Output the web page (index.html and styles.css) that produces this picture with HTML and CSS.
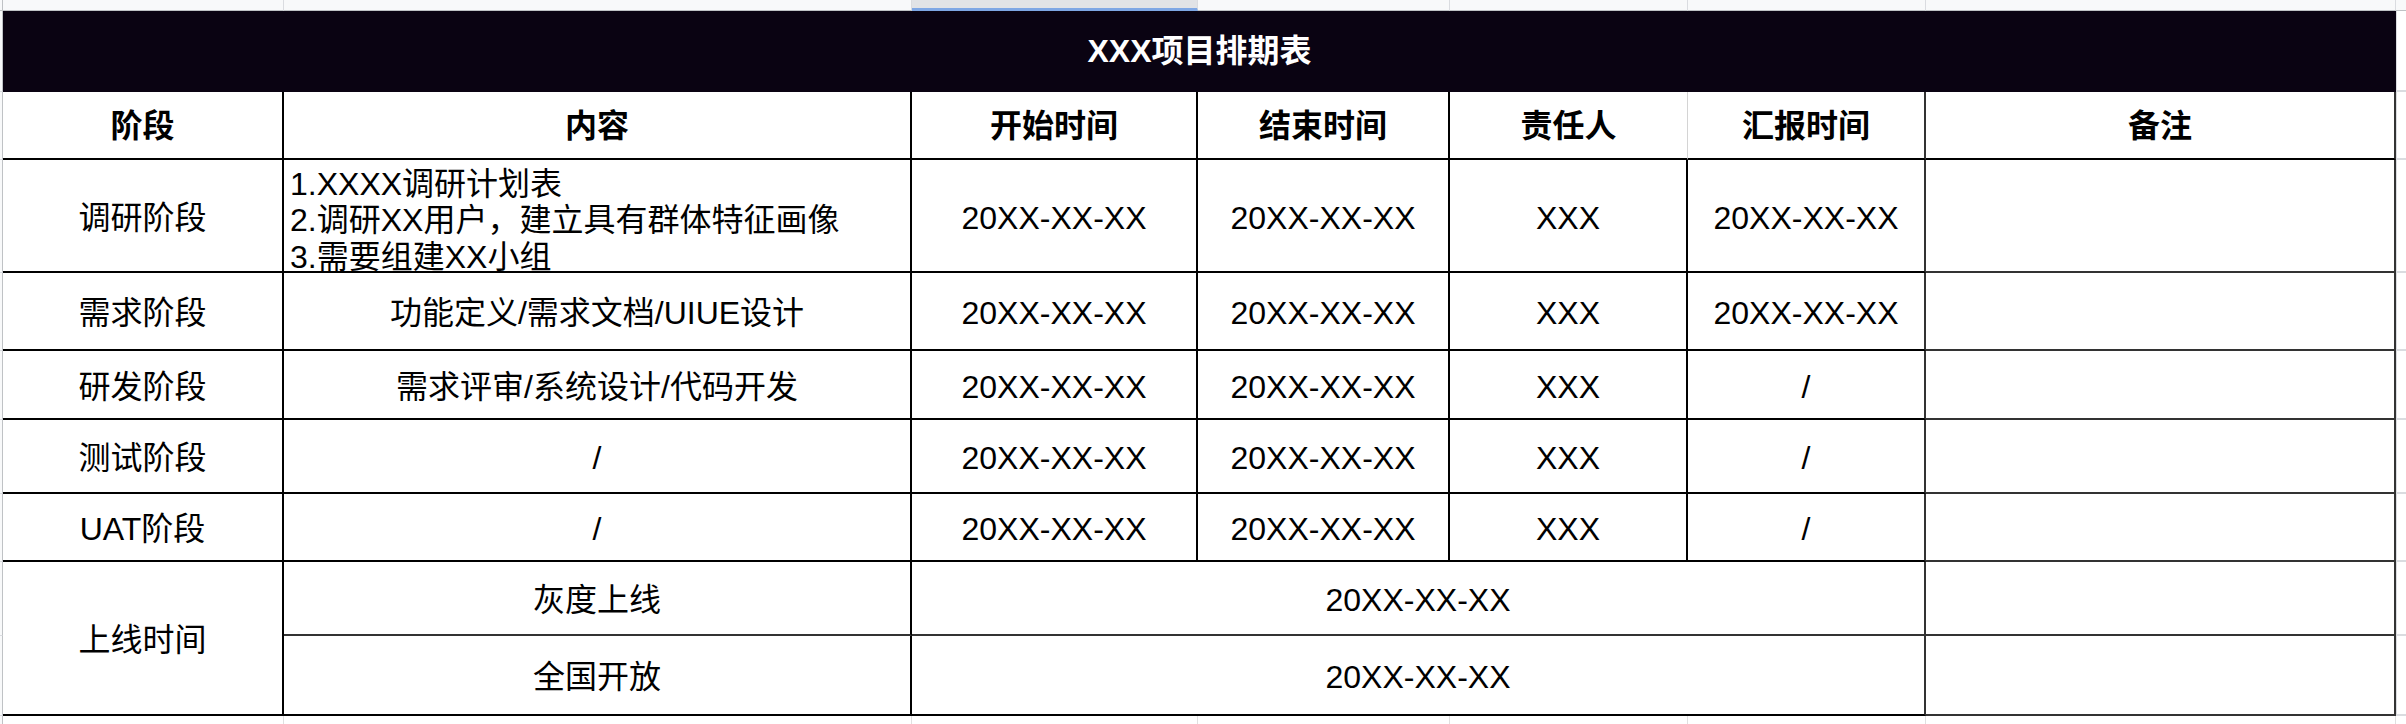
FILE: index.html
```html
<!DOCTYPE html>
<html lang="zh-CN">
<head>
<meta charset="utf-8">
<title>XXX项目排期表</title>
<link rel="stylesheet" href="styles.css">
</head>
<body>
<div class="sheet">
  <!-- spreadsheet column header strip -->
  <div class="ch corner"></div>
  <div class="ch"></div>
  <div class="ch"></div>
  <div class="ch sel"></div>
  <div class="ch"></div>
  <div class="ch"></div>
  <div class="ch"></div>
  <div class="ch"></div>
  <div class="ch last"></div>

  <!-- title -->
  <div class="rh"></div>
  <div class="title">XXX项目排期表</div>
  <div class="rp"></div>

  <!-- header -->
  <div class="rh"></div>
  <div class="c hd">阶段</div>
  <div class="c hd">内容</div>
  <div class="c hd">开始时间</div>
  <div class="c hd">结束时间</div>
  <div class="c hd soft">责任人</div>
  <div class="c hd dk">汇报时间</div>
  <div class="c hd dk">备注</div>
  <div class="rp"></div>

  <!-- row 1 -->
  <div class="rh"></div>
  <div class="c">调研阶段</div>
  <div class="c multi"><span>1.XXXX调研计划表</span><span>2.调研XX用户，建立具有群体特征画像</span><span>3.需要组建XX小组</span></div>
  <div class="c">20XX-XX-XX</div>
  <div class="c">20XX-XX-XX</div>
  <div class="c">XXX</div>
  <div class="c dk">20XX-XX-XX</div>
  <div class="c dk note"></div>
  <div class="rp"></div>

  <!-- row 2 -->
  <div class="rh"></div>
  <div class="c">需求阶段</div>
  <div class="c">功能定义/需求文档/UIUE设计</div>
  <div class="c">20XX-XX-XX</div>
  <div class="c">20XX-XX-XX</div>
  <div class="c">XXX</div>
  <div class="c dk">20XX-XX-XX</div>
  <div class="c dk note"></div>
  <div class="rp"></div>

  <!-- row 3 -->
  <div class="rh"></div>
  <div class="c">研发阶段</div>
  <div class="c">需求评审/系统设计/代码开发</div>
  <div class="c">20XX-XX-XX</div>
  <div class="c">20XX-XX-XX</div>
  <div class="c">XXX</div>
  <div class="c dk">/</div>
  <div class="c dk note"></div>
  <div class="rp"></div>

  <!-- row 4 -->
  <div class="rh"></div>
  <div class="c">测试阶段</div>
  <div class="c">/</div>
  <div class="c">20XX-XX-XX</div>
  <div class="c">20XX-XX-XX</div>
  <div class="c">XXX</div>
  <div class="c dk">/</div>
  <div class="c dk note"></div>
  <div class="rp"></div>

  <!-- row 5 -->
  <div class="rh"></div>
  <div class="c">UAT阶段</div>
  <div class="c">/</div>
  <div class="c">20XX-XX-XX</div>
  <div class="c">20XX-XX-XX</div>
  <div class="c">XXX</div>
  <div class="c dk">/</div>
  <div class="c dk note"></div>
  <div class="rp"></div>

  <!-- row 6 -->
  <div class="rh"></div>
  <div class="c span-rows">上线时间</div>
  <div class="c sub">灰度上线</div>
  <div class="c dk sub span-cols">20XX-XX-XX</div>
  <div class="c dk sub note"></div>
  <div class="rp"></div>

  <!-- row 7 -->
  <div class="rh"></div>
  <div class="c">全国开放</div>
  <div class="c dk span-cols">20XX-XX-XX</div>
  <div class="c dk note"></div>
  <div class="rp"></div>

  <!-- spreadsheet grid below -->
  <div class="bc corner"></div>
  <div class="bc"></div>
  <div class="bc"></div>
  <div class="bc"></div>
  <div class="bc"></div>
  <div class="bc"></div>
  <div class="bc"></div>
  <div class="bc"></div>
  <div class="bc last"></div>
</div>
</body>
</html>
```

FILE: styles.css
```css
* {
  box-sizing: border-box;
}

html, body {
  margin: 0;
  padding: 0;
  background: #ffffff;
}

body {
  width: 2406px;
  height: 724px;
  overflow: hidden;
  font-family: "Liberation Sans", "Noto Sans CJK SC", sans-serif;
  color: #000000;
}

.sheet {
  display: grid;
  grid-template-columns: 3px 281px 628px 286px 252px 238px 238px 470px 10px;
  grid-template-rows: 11px 81px 68px 113px 78px 69px 74px 68px 74px 80px 8px;
}

/* spreadsheet column header strip */
.ch {
  background: #f8f9fa;
  border-right: 1px solid #dadce0;
  border-bottom: 1px solid #bfc2c5;
}
.ch.corner {
  border-right: 1px solid #bfc2c5;
}
.ch.sel {
  background: #e1e3e6;
  border-bottom: 3px solid #7ea7e4;
}
.ch.last {
  border-right: none;
}

/* row header strip on the left */
.rh {
  background: #f8f9fa;
  border-right: 1px solid #bfc2c5;
  border-bottom: 1px solid #dadce0;
}

/* right pad cells */
.rp {
  background: #ffffff;
  border-bottom: 2px solid #dadce0;
  border-left: 1px solid #dadce0;
}

/* bottom grid */
.bc {
  background: #ffffff;
  border-right: 1px solid #e0e0e0;
}
.bc.corner {
  background: #f8f9fa;
  border-right: 1px solid #bfc2c5;
}
.bc.last {
  border-right: none;
}

/* title bar */
.title {
  grid-column: span 7;
  background: #0a0312;
  color: #ffffff;
  font-weight: bold;
  font-size: 32px;
  line-height: 1;
  padding-bottom: 2px;
  display: flex;
  align-items: center;
  justify-content: center;
}

/* table cells */
.c {
  display: flex;
  align-items: center;
  justify-content: center;
  font-size: 32px;
  line-height: 1;
  padding-top: 4px;
  white-space: nowrap;
  border-right: 2px solid #000000;
  border-bottom: 2px solid #000000;
  background: #ffffff;
}

.c.hd {
  font-weight: bold;
  padding-top: 2px;
}

.c.soft {
  border-right: 1px solid #d4d4d4;
}

.c.dk {
  border-right-color: #333333;
}

.c.note {
  border-bottom-color: #333333;
}

.c.sub {
  border-bottom-color: #333333;
}

.c.multi {
  flex-direction: column;
  align-items: flex-start;
  justify-content: center;
  padding: 10px 0 0 6px;
  line-height: 36.5px;
}

.span-rows {
  grid-row: span 2;
}

.span-cols {
  grid-column: span 4;
}
```
